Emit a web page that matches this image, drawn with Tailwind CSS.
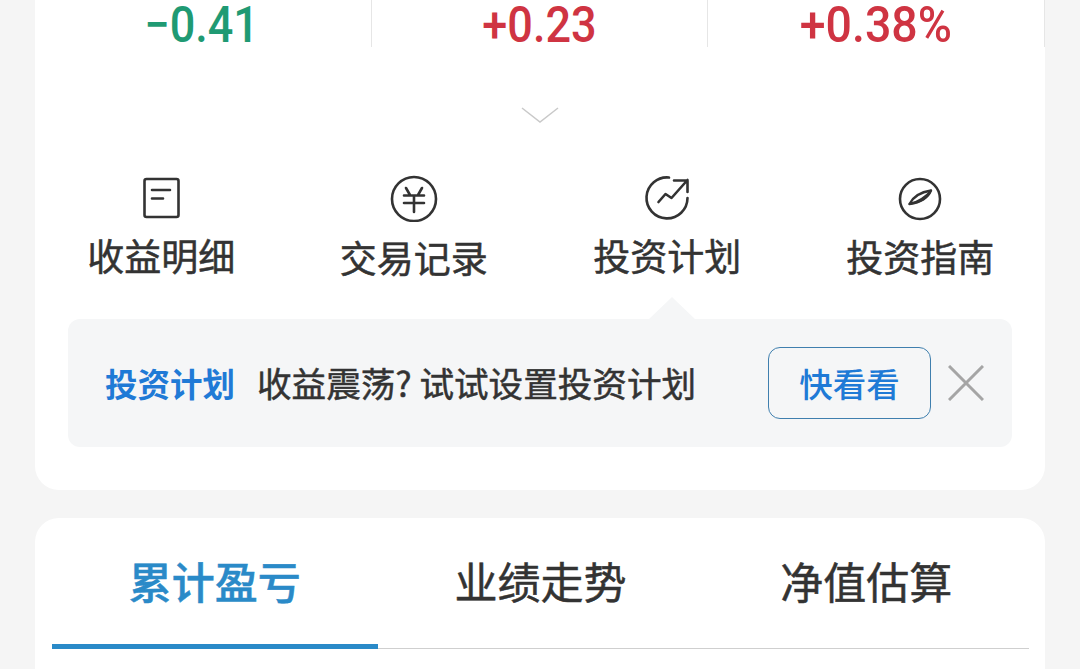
<!DOCTYPE html>
<html lang="zh-CN">
<head>
  <meta charset="UTF-8">
  <meta name="viewport" content="width=device-width, initial-scale=1.0">
  <title>基金详情</title>
  <script src="https://cdn.jsdelivr.net/npm/@tailwindcss/browser@4"></script>
</head>
<body class="bg-[#f5f5f5] font-['Noto_Sans_CJK_SC',sans-serif]">
  <div class="h-[669px] w-[1080px] overflow-hidden px-[35px]">

    <!-- 收益卡片 -->
    <section class="h-[490px] rounded-b-[24px] bg-white">
      <div class="grid h-[47px] grid-cols-3 text-center font-['Roboto',sans-serif] text-[50px] font-medium leading-[44px]">
        <div class="border-r border-[#e6e6e6] pt-[3px] pr-[3px] text-[#1f9a73]"><span class="inline-block scale-x-[.9]">−0.41</span></div>
        <div class="border-r border-[#e6e6e6] pt-[3px] text-[#cf3442]"><span class="inline-block scale-x-[.9]">+0.23</span></div>
        <div class="border-r border-[#e6e6e6] pt-[3px] text-[#cf3442]"><span class="inline-block scale-x-[.93]">+0.38%</span></div>
      </div>

      <div class="flex h-[127px] justify-center pt-[60px]">
        <svg class="h-[18px] w-[38px]" viewBox="0 0 38 18" fill="none" stroke="#c9c9c9" stroke-width="1.5"><path d="M1 1l18 14L37 1"/></svg>
      </div>

      <!-- 功能入口 -->
      <nav class="grid grid-cols-4 text-center text-[37px] leading-[48px] text-[#333] [-webkit-text-stroke:0.5px_#333]">
        <a class="flex flex-col items-center">
          <svg class="h-[48px] w-[48px]" viewBox="0 0 48 48" fill="none" stroke="#333" stroke-width="2.6" stroke-linecap="round" stroke-linejoin="round"><rect x="7.5" y="5" width="34" height="38" rx="2"/><path d="M15 16h18M15 24.500h11"/></svg>
          <span class="mt-[9px]">收益明细</span>
        </a>
        <a class="flex flex-col items-center">
          <svg class="h-[48px] w-[48px]" viewBox="0 0 48 48" fill="none" stroke="#333" stroke-width="2.6" stroke-linecap="round"><circle cx="24" cy="25" r="22"/><path d="M16 14l4 7M32 14l-4 7M14 21.500h20M14 29h20M24 21.500V38"/></svg>
          <span class="mt-[11px]">交易记录</span>
        </a>
        <a class="flex flex-col items-center pl-[2px]">
          <svg class="h-[48px] w-[48px]" viewBox="0 0 48 48" fill="none" stroke="#333" stroke-width="2.6" stroke-linecap="round" stroke-linejoin="round"><path d="M26 3.500A20.500 20.500 0 1 0 44.500 24"/><path d="M15.500 28l7-8 6 4 16-18M31 6.500h13.500V18"/></svg>
          <span class="mt-[9px]">投资计划</span>
        </a>
        <a class="flex flex-col items-center pl-[3px]">
          <svg class="h-[48px] w-[48px]" viewBox="0 0 48 48" fill="none" stroke="#333" stroke-width="2.6" stroke-linejoin="round"><circle cx="24" cy="25" r="20"/><path d="M13.500 30C17 23 25 18 35 16.500c-3 7-11 12-21.500 13.500z" stroke-width="2.400"/><path d="M13.500 30C22 27.500 30 22.500 35 16.500c-3 7-11 12-21.500 13.500z" fill="#333" stroke-width="1.800"/></svg>
          <span class="mt-[10px]">投资指南</span>
        </a>
      </nav>

      <!-- 提示条 -->
      <div class="relative mx-[33px] mt-[38px] flex h-[128px] items-center rounded-[12px] bg-[#f5f6f7] pl-[37px]">
        <div class="absolute top-[-22px] left-[580px] h-[23px] w-[48px] bg-[#f5f6f7] [clip-path:polygon(50%_0,100%_100%,0_100%)]"></div>
        <span class="text-[32.500px] font-bold text-[#1f7ad6]">投资计划</span>
        <span class="ml-[22px] text-[34.600px] text-[#333] [-webkit-text-stroke:0.5px_#333]">收益震荡? 试试设置投资计划</span>
        <button class="ml-auto h-[72px] w-[163px] rounded-[12px] border border-[#3f7fae] text-[33.500px] font-medium text-[#1f7ad6]">快看看</button>
        <svg class="mr-[28px] ml-[17px] h-[36px] w-[36px]" viewBox="0 0 36 36" stroke="#a5a5a5" stroke-width="3"><path d="M1 1l34 34M35 1L1 35"/></svg>
      </div>
    </section>

    <!-- 走势卡片 -->
    <section class="mt-[28px] h-[200px] rounded-t-[24px] bg-white pr-[16px] pl-[17px]">
      <div class="grid h-[131px] grid-cols-3 border-b border-[#cfcfcf] text-center text-[43px] leading-[124px] text-[#333] [-webkit-text-stroke:0.5px_#333]">
        <div class="relative font-medium text-[#2a8ac8] [-webkit-text-stroke:0.5px_#2a8ac8]">累计盈亏<div class="absolute right-0 bottom-[-1px] left-0 h-[5px] bg-[#2a8ac8]"></div></div>
        <div>业绩走势</div>
        <div>净值估算</div>
      </div>
    </section>

  </div>
</body>
</html>
